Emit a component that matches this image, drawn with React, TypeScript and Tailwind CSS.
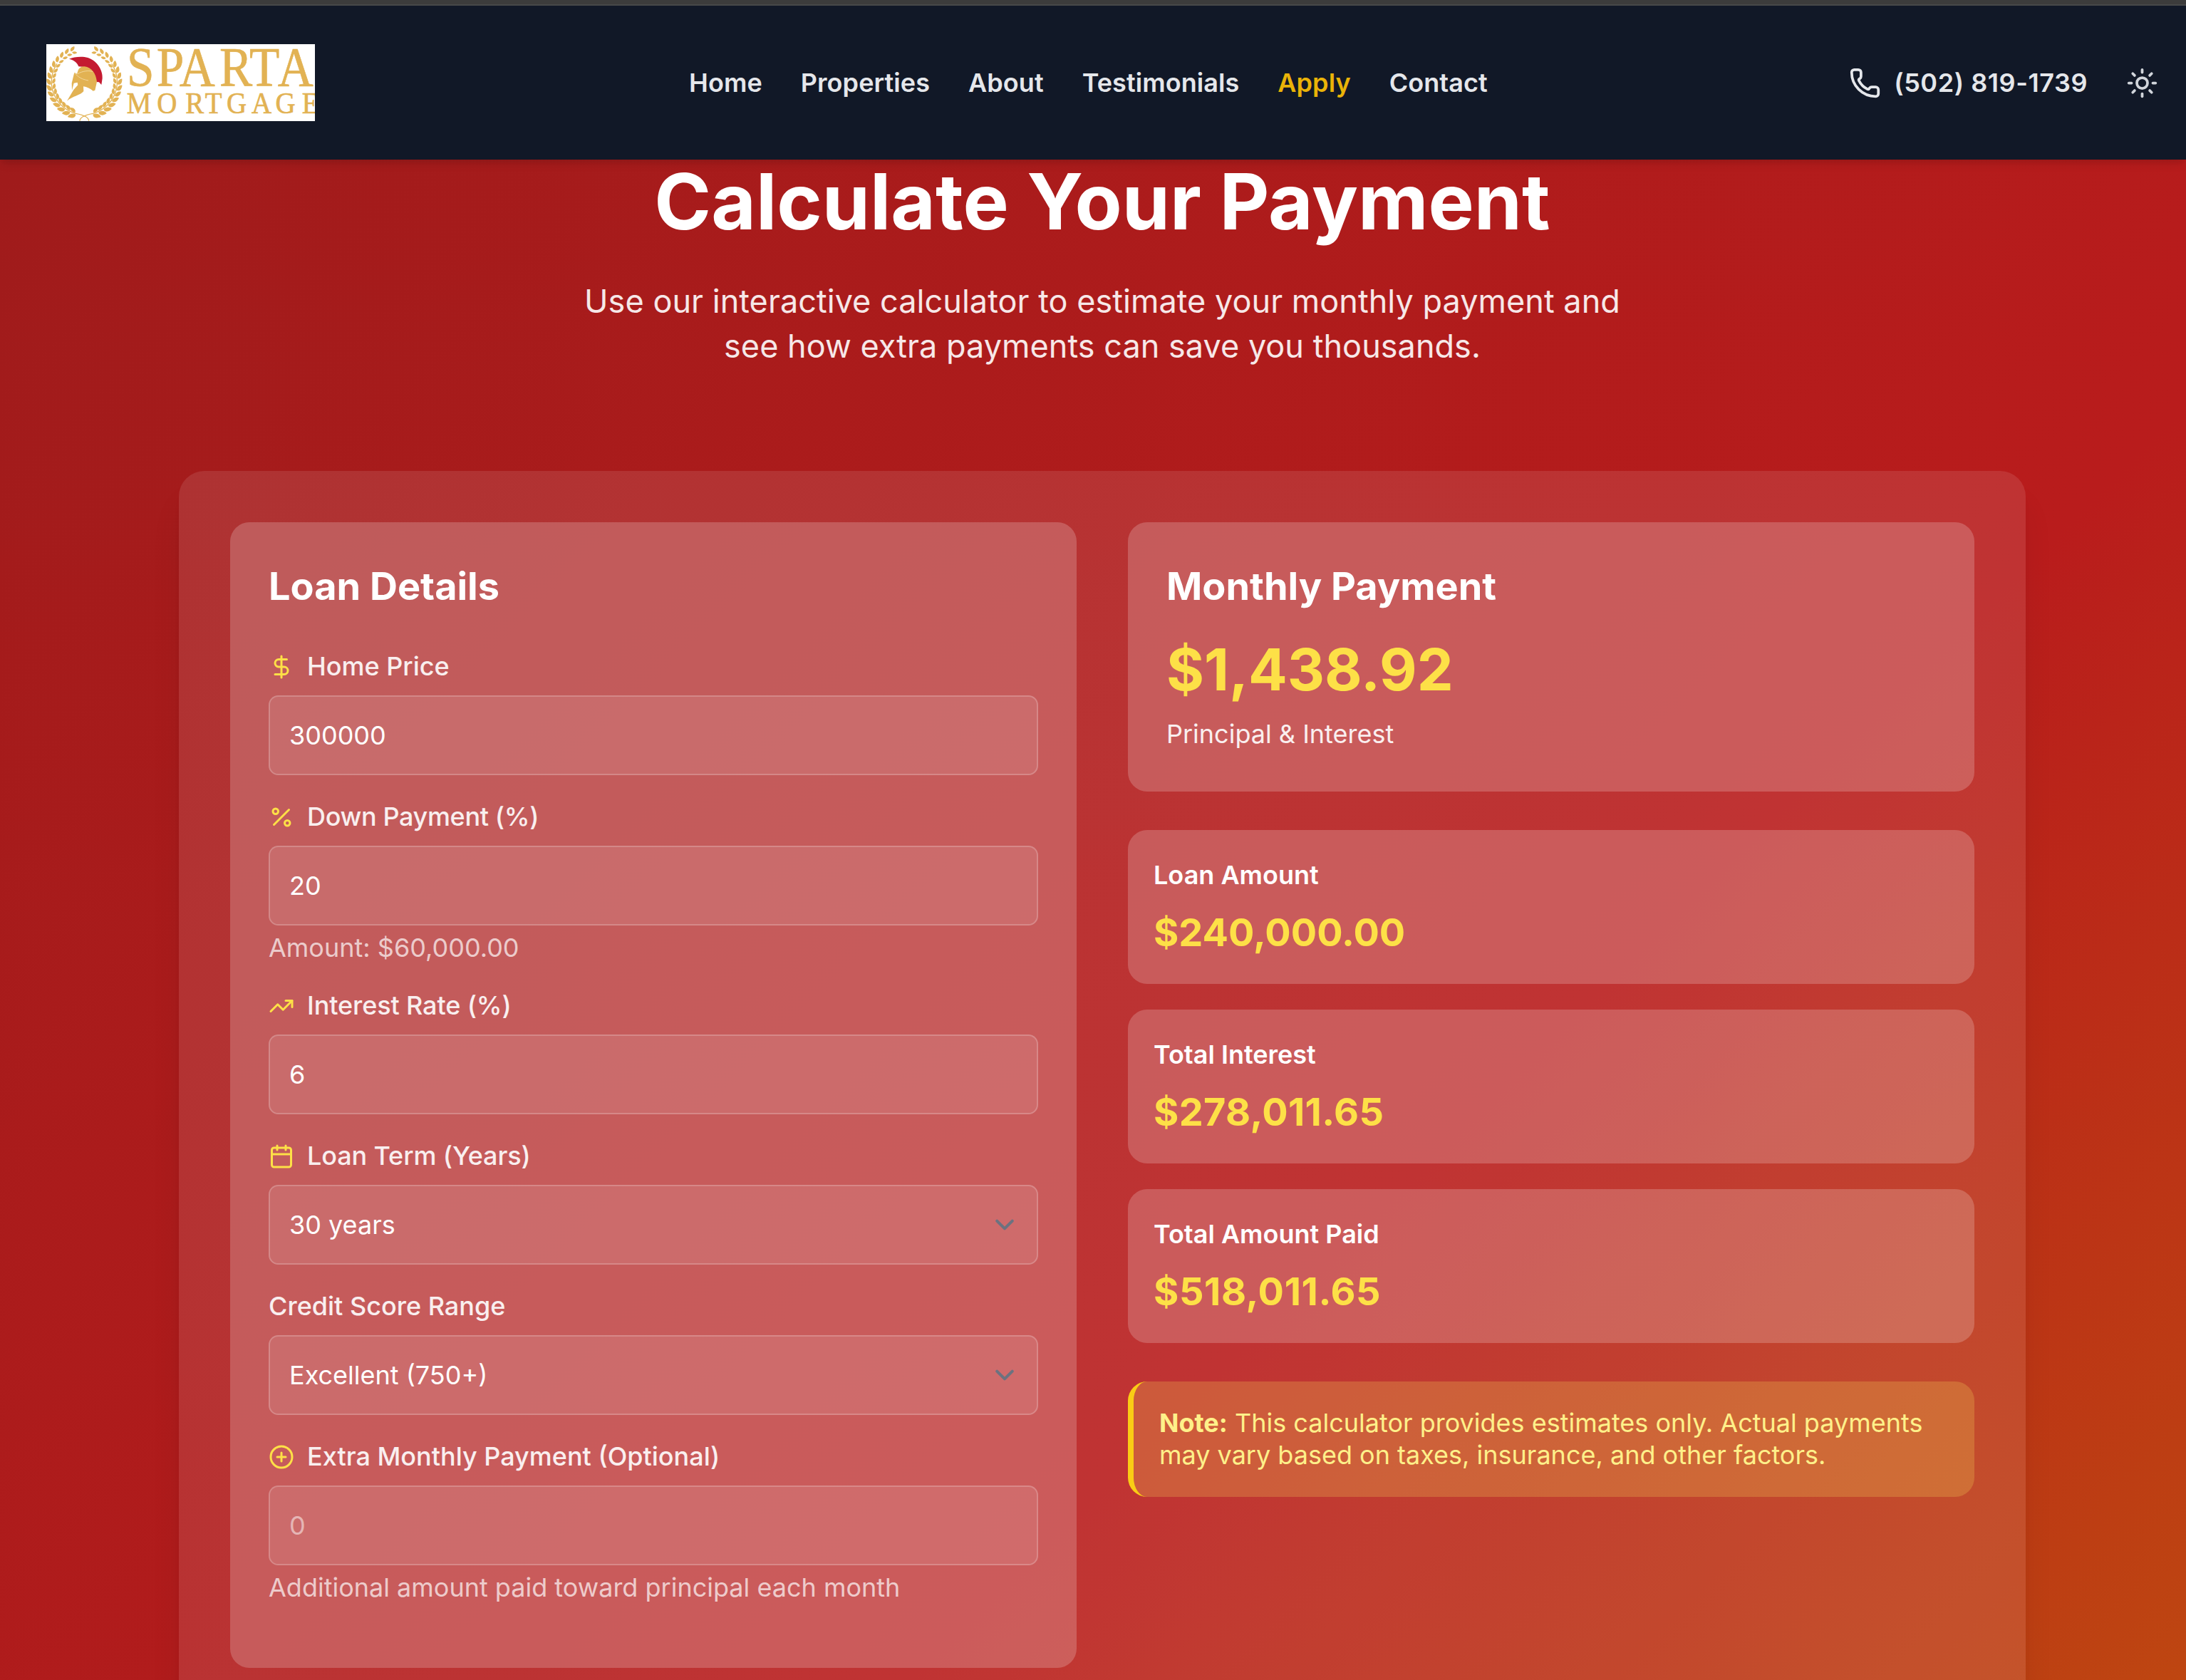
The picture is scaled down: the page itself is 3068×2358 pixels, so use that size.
import React from "react";
import { Phone, Sun, DollarSign, Percent, TrendingUp, Calendar, CirclePlus } from "lucide-react";

const GOLD = "#e2b253";

const NAV_LINKS = [
  { label: "Home", active: false },
  { label: "Properties", active: false },
  { label: "About", active: false },
  { label: "Testimonials", active: false },
  { label: "Apply", active: true },
  { label: "Contact", active: false },
];

const SUMMARY = [
  { title: "Loan Amount", value: "$240,000.00", tracking: "" },
  { title: "Total Interest", value: "$278,011.65", tracking: "tracking-[0.35px]" },
  { title: "Total Amount Paid", value: "$518,011.65", tracking: "tracking-[0.6px]" },
];

// One laurel branch: pairs of leaves set along an arc of the wreath.
function Branch({ mirrored }: { mirrored: boolean }) {
  const cx = 355;
  const cy = 345;
  const r = 138;
  const leaves: React.ReactNode[] = [];
  for (let i = 0; i < 15; i++) {
    const deg = 105 + i * 10.1;
    const a = (deg * Math.PI) / 180;
    const x = cx + r * Math.cos(a);
    const y = cy + r * Math.sin(a);
    const size = 1.02 - i * 0.02;
    leaves.push(
      <g key={i} transform={`translate(${x} ${y}) rotate(${deg + 90}) scale(${size})`}>
        <path d="M0 -3C-4 -15 8 -26 29 -22C28 -9 15 0 0 -3Z" />
        <path d="M4 4C3 15 14 23 29 18C26 8 16 1 4 4Z" />
      </g>
    );
  }
  return (
    <g transform={mirrored ? "translate(710 0) scale(-1 1)" : undefined} fill={GOLD}>
      <path
        d="M374 509C374 492 352 484 319 478A138 138 0 0 1 240 268"
        fill="none"
        stroke={GOLD}
        strokeWidth="4"
      />
      {leaves}
    </g>
  );
}

function Logo() {
  return (
    <svg
      viewBox="195 186 1131 324"
      preserveAspectRatio="none"
      className="h-[108px] w-[377px] shrink-0 bg-white"
      role="img"
      aria-label="Sparta Mortgage"
    >
      <Branch mirrored={false} />
      <Branch mirrored />
      <path
        d="M291 248C310 240 345 236 370 243C412 257 434 300 431 330L427 357L417 346L405 345C398 305 378 281 331 280C326 266 314 254 291 248Z"
        fill="#c41a30"
      />
      <path
        d="M330 293C336 284 345 279 356 280C386 283 404 310 408 344L400 380L392 383C380 373 366 366 351 364L352 384C338 402 306 404 282 425L310 378L328 358L326 347L311 350L303 380L302 350L313 305L324 311Z"
        fill={GOLD}
      />
      <path d="M325 312C350 297 378 296 390 302" fill="none" stroke="#f3d79c" strokeWidth="3" />
      <path d="M313 306C330 326 345 334 372 339" fill="none" stroke="#f3d79c" strokeWidth="3" />
      <g fill={GOLD} stroke={GOLD} strokeWidth="2" fontFamily="'Liberation Serif', serif">
        <text transform="scale(0.88 1)" y="361" fontSize="236" x="607 749 858 1050 1193 1329">
          SPARTA
        </text>
        <text transform="scale(0.92 1)" y="476" fontSize="127" x="580 718 849 938 1037 1151 1260 1382">
          MORTGAGE
        </text>
      </g>
    </svg>
  );
}

const FIELD =
  "block h-28 w-full appearance-none rounded-[13.5px] border-2 border-white/20 bg-white/10 px-[27px] text-[36px] leading-[54px] text-white outline-none placeholder:text-white/50";

const ICON = "mr-[18px] size-9 text-[#fde047]";

function Field({
  icon,
  label,
  hint,
  tracking = "",
  children,
}: {
  icon?: React.ReactNode;
  label: string;
  hint?: string;
  tracking?: string;
  children: React.ReactNode;
}) {
  return (
    <div>
      <label
        className={`mb-[18px] flex h-[45px] items-center text-[36px] leading-[45px] font-medium text-white/90 ${tracking}`}
      >
        {icon}
        {label}
      </label>
      {children}
      {hint && <p className="mt-[9px] text-[36px] leading-[45px] text-white/70">{hint}</p>}
    </div>
  );
}

function Select({ options }: { options: string[] }) {
  return (
    <div className="relative">
      <select className={FIELD}>
        {options.map((o) => (
          <option key={o}>{o}</option>
        ))}
      </select>
      <svg
        viewBox="0 0 20 20"
        fill="none"
        stroke="#6b7280"
        strokeWidth="1.5"
        strokeLinecap="round"
        strokeLinejoin="round"
        className="pointer-events-none absolute top-[29px] right-5 size-[54px]"
      >
        <path d="m6 8 4 4 4-4" />
      </svg>
    </div>
  );
}

export default function App() {
  return (
    <div className="h-[2358px] w-[3068px] overflow-hidden bg-[linear-gradient(135deg,#9e1b1b_0%,#b91c1c_67%,#be4611_100%)] font-['Inter',sans-serif]">
      <div className="h-2 border-b-2 border-[#474949] bg-[#3c3c3c]" />
      <nav className="flex h-[216px] items-center bg-[#111827] pl-[65px] shadow-[0_8px_12px_-2px_rgb(0_0_0/0.1),0_4px_8px_-4px_rgb(0_0_0/0.1)]">
        <Logo />
        <div className="ml-[525px] flex gap-[54px] text-[36px] leading-[54px] font-semibold tracking-[0.07px] text-gray-200">
          {NAV_LINKS.map((l) => (
            <a key={l.label} className={l.active ? "text-[#eab308]" : undefined}>
              {l.label}
            </a>
          ))}
        </div>
        <div className="mr-[39px] ml-auto flex items-center text-[#e5e7eb]">
          <Phone className="mr-[18px] size-[45px]" />
          <span className="text-[36px] leading-[54px] font-semibold tracking-[0.55px]">
            (502) 819-1739
          </span>
          <Sun className="ml-[54px] size-[45px] text-[#d1d5db]" />
        </div>
      </nav>

      <section className="ml-[251px] w-[2592px] pt-[5px]">
        <h2 className="text-center text-[108px] leading-[108px] font-bold text-white">
          Calculate Your Payment
        </h2>
        <p className="mt-[54px] text-center text-[45px] leading-[63px] tracking-[0.04px] text-white/90">
          Use our interactive calculator to estimate your monthly payment and
          <br />
          see how extra payments can save you thousands.
        </p>

        <div className="mt-36 grid h-[1900px] grid-cols-2 items-start gap-[72px] rounded-[36px] bg-white/10 p-[72px] shadow-[0_40px_50px_-10px_rgb(0_0_0/0.1),0_16px_20px_-12px_rgb(0_0_0/0.1)]">
          <div className="rounded-[27px] bg-white/20 p-[54px] pb-[90px]">
            <h3 className="mb-[54px] text-[54px] leading-[72px] font-bold text-white">Loan Details</h3>
            <div className="flex flex-col gap-9">
              <Field icon={<DollarSign className={ICON} />} label="Home Price">
                <input className={FIELD} defaultValue="300000" />
              </Field>
              <Field
                icon={<Percent className={ICON} />}
                label="Down Payment (%)"
                hint="Amount: $60,000.00"
                tracking="tracking-[-0.35px]"
              >
                <input className={FIELD} defaultValue="20" />
              </Field>
              <Field
                icon={<TrendingUp className={ICON} />}
                label="Interest Rate (%)"
                tracking="tracking-[-0.12px]"
              >
                <input className={FIELD} defaultValue="6" />
              </Field>
              <Field
                icon={<Calendar className={ICON} />}
                label="Loan Term (Years)"
                tracking="tracking-[-0.12px]"
              >
                <Select options={["30 years"]} />
              </Field>
              <Field label="Credit Score Range">
                <Select options={["Excellent (750+)"]} />
              </Field>
              <Field
                icon={<CirclePlus className={ICON} />}
                label="Extra Monthly Payment (Optional)"
                hint="Additional amount paid toward principal each month"
              >
                <input className={FIELD} placeholder="0" />
              </Field>
            </div>
          </div>

          <div className="flex flex-col gap-[54px]">
            <div className="rounded-[27px] bg-white/20 p-[54px]">
              <h3 className="text-[54px] leading-[72px] font-bold text-white">Monthly Payment</h3>
              <p className="mt-9 text-[81px] leading-[90px] font-bold text-[#fde047]">$1,438.92</p>
              <p className="mt-[18px] text-[36px] leading-[54px] text-white/90">Principal &amp; Interest</p>
            </div>
            <div className="flex flex-col gap-9">
              {SUMMARY.map((s) => (
                <div key={s.title} className="rounded-[27px] bg-white/20 p-9">
                  <h4 className="mb-[18px] text-[36px] leading-[54px] font-semibold text-white">
                    {s.title}
                  </h4>
                  <p className={`text-[54px] leading-[72px] font-bold text-[#fde047] ${s.tracking}`}>
                    {s.value}
                  </p>
                </div>
              ))}
            </div>
            <div className="rounded-[27px] border-l-8 border-[#facc15] bg-[rgb(250_232_90/0.22)] p-9 text-[36px] leading-[45px] text-[#fef08a]">
              <strong className="font-bold">Note:</strong> This calculator provides estimates only.
              Actual payments may vary based on taxes, insurance, and other factors.
            </div>
          </div>
        </div>
      </section>
    </div>
  );
}
